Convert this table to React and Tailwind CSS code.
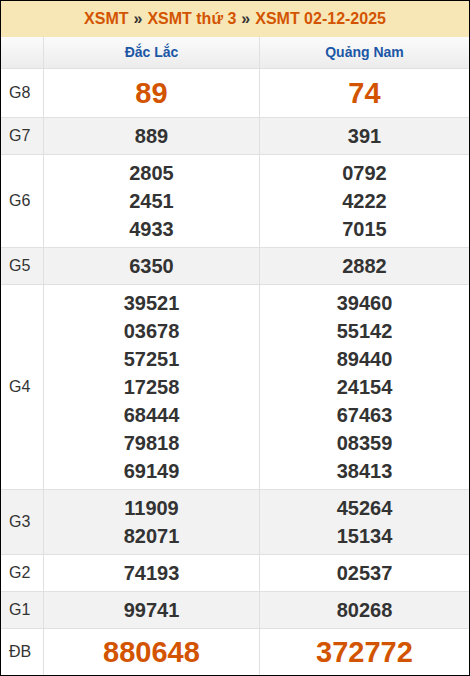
import React from "react";

const rows = [
  { label: "G8", a: ["89"], b: ["74"], big: true, lh: "leading-[40px]", alt: false },
  { label: "G7", a: ["889"], b: ["391"], alt: true },
  { label: "G6", a: ["2805", "2451", "4933"], b: ["0792", "4222", "7015"], alt: false },
  { label: "G5", a: ["6350"], b: ["2882"], alt: true },
  {
    label: "G4",
    a: ["39521", "03678", "57251", "17258", "68444", "79818", "69149"],
    b: ["39460", "55142", "89440", "24154", "67463", "08359", "38413"],
    alt: false,
  },
  { label: "G3", a: ["11909", "82071"], b: ["45264", "15134"], alt: true },
  { label: "G2", a: ["74193"], b: ["02537"], alt: false },
  { label: "G1", a: ["99741"], b: ["80268"], alt: true },
  { label: "ĐB", a: ["880648"], b: ["372772"], big: true, lh: "leading-[38px]", alt: false },
];

function Cell({ nums, big, lh }) {
  return (
    <div className="border-l border-[#e0e0e0] py-1 flex flex-col items-center">
      {nums.map((n) => (
        <span
          key={n}
          className={
            big
              ? `text-[29px] font-bold text-[#d35400] ${lh}`
              : "text-[20px] font-bold text-[#333] leading-[28px]"
          }
        >
          {n}
        </span>
      ))}
    </div>
  );
}

export default function App() {
  return (
    <div
      className="w-[470px] h-[676px] border border-black bg-white"
      style={{ fontFamily: '"Liberation Sans", Arial, sans-serif' }}
    >
      <div className="h-[36px] bg-[#f7e7b7] flex items-center justify-center text-[16px] font-bold text-[#d35400]">
        <span>XSMT</span>
        <span className="text-[#333] mx-[5px]">»</span>
        <span>XSMT thứ 3</span>
        <span className="text-[#333] mx-[5px]">»</span>
        <span>XSMT 02-12-2025</span>
      </div>
      <div className="grid grid-cols-[42px_216px_1fr] h-[31px] bg-gradient-to-b from-[#fbfbfb] to-[#ececec]">
        <div></div>
        <div className="border-l border-[#e0e0e0] flex items-center justify-center text-[14px] font-bold text-[#1b57a6]">
          Đắc Lắc
        </div>
        <div className="border-l border-[#e0e0e0] flex items-center justify-center text-[14px] font-bold text-[#1b57a6]">
          Quảng Nam
        </div>
      </div>
      {rows.map((r) => (
        <div
          key={r.label}
          className={`grid grid-cols-[42px_216px_1fr] border-t border-[#e0e0e0] ${
            r.alt ? "bg-[#f2f2f2]" : "bg-white"
          }`}
        >
          <div className="flex items-center pl-2 text-[16px] text-[#333]">{r.label}</div>
          <Cell nums={r.a} big={r.big} lh={r.lh} />
          <Cell nums={r.b} big={r.big} lh={r.lh} />
        </div>
      ))}
    </div>
  );
}
